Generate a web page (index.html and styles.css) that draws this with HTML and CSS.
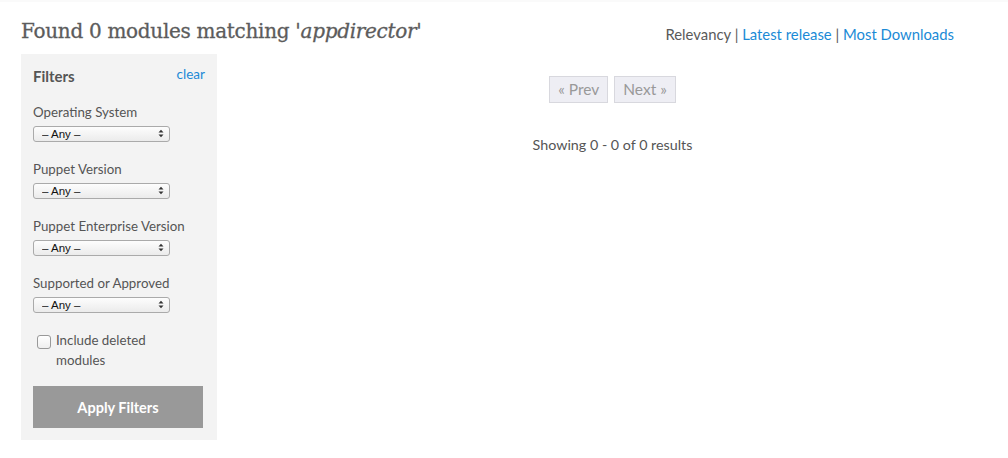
FILE: index.html
```html
<!DOCTYPE html>
<html>
<head>
<meta charset="utf-8">
<link rel="stylesheet" href="styles.css">
</head>
<body>
<div class="page">
  <div class="topline"></div>
  <div class="head">
    <h1 class="title">Found 0 modules matching '<em>appdirector</em>'</h1>
    <div class="sort">Relevancy <span class="sep">|</span> <a href="#">Latest release</a> <span class="sep">|</span> <a href="#">Most Downloads</a></div>
  </div>
  <div class="body">
    <aside class="filters">
      <div class="filters-head">
        <span class="filters-title">Filters</span>
        <a href="#" class="clear">clear</a>
      </div>
      <div class="field">
        <div class="label">Operating System</div>
        <div class="select-wrap">
          <select class="select"><option>– Any –</option></select>
          <svg class="arrows" width="6" height="9" viewBox="0 0 6 9"><path d="M0.5 3.5 L3 0.8 L5.5 3.5 Z M0.5 5.5 L3 8.2 L5.5 5.5 Z" fill="#333"/></svg>
        </div>
      </div>
      <div class="field">
        <div class="label">Puppet Version</div>
        <div class="select-wrap">
          <select class="select"><option>– Any –</option></select>
          <svg class="arrows" width="6" height="9" viewBox="0 0 6 9"><path d="M0.5 3.5 L3 0.8 L5.5 3.5 Z M0.5 5.5 L3 8.2 L5.5 5.5 Z" fill="#333"/></svg>
        </div>
      </div>
      <div class="field">
        <div class="label">Puppet Enterprise Version</div>
        <div class="select-wrap">
          <select class="select"><option>– Any –</option></select>
          <svg class="arrows" width="6" height="9" viewBox="0 0 6 9"><path d="M0.5 3.5 L3 0.8 L5.5 3.5 Z M0.5 5.5 L3 8.2 L5.5 5.5 Z" fill="#333"/></svg>
        </div>
      </div>
      <div class="field">
        <div class="label">Supported or Approved</div>
        <div class="select-wrap">
          <select class="select"><option>– Any –</option></select>
          <svg class="arrows" width="6" height="9" viewBox="0 0 6 9"><path d="M0.5 3.5 L3 0.8 L5.5 3.5 Z M0.5 5.5 L3 8.2 L5.5 5.5 Z" fill="#333"/></svg>
        </div>
      </div>
      <label class="check">
        <input type="checkbox" class="checkbox">
        <span class="check-text">Include deleted modules</span>
      </label>
      <button class="apply">Apply Filters</button>
    </aside>
    <main class="results">
      <div class="pager">
        <span class="pbtn">« Prev</span>
        <span class="pbtn">Next »</span>
      </div>
      <p class="showing">Showing 0 - 0 of 0 results</p>
    </main>
  </div>
</div>
</body>
</html>
```

FILE: styles.css
```css
* { box-sizing: border-box; }
html, body { margin: 0; padding: 0; background: #fff; }
body {
  font-family: "Lato", "Noto Sans", sans-serif;
  font-size: 14px;
  color: #555;
}
.page { width: 1008px; }
.topline { height: 2px; background: #fafafa; }
.head {
  display: flex;
  justify-content: space-between;
  align-items: flex-end;
  padding: 0 54px 0 21px;
  height: 52px;
}
.title {
  margin: 0 0 11px 0;
  font-family: "DejaVu Serif", serif;
  font-weight: normal;
  font-size: 20px;
  color: #5c5c5c;
  letter-spacing: -0.3px;
  -webkit-text-stroke: 0.3px #5c5c5c;
}
.title em { font-style: italic; }
.sort {
  font-size: 14.85px;
  color: #5a5a5a;
  margin-bottom: 11px;
}
.sort a { color: #1b8ad6; text-decoration: none; }
.sep { color: #5a5a5a; }
.body {
  display: flex;
  padding: 0 0 0 21px;
}
.filters {
  width: 196px;
  background: #f3f3f3;
  padding: 12px;
  display: flex;
  flex-direction: column;
}
.filters-head {
  display: flex;
  justify-content: space-between;
  height: 20px;
  margin-bottom: 16px;
  line-height: 20px;
}
.filters-title { font-weight: bold; color: #555; font-size: 15px; }
.clear { color: #1b8ad6; text-decoration: none; font-size: 13.5px; line-height: 16px; }
.field { margin-bottom: 17px; }
.label { line-height: 20px; height: 20px; margin-bottom: 4px; color: #555; font-size: 13.3px; }
.select-wrap { position: relative; width: 137px; height: 16px; }
.select {
  -webkit-appearance: none;
  appearance: none;
  width: 137px;
  height: 16px;
  border: 1px solid #aaa;
  border-radius: 3px;
  background: linear-gradient(#fdfdfd, #ebebeb);
  font-family: "Liberation Sans", sans-serif;
  font-size: 11.5px;
  color: #111;
  padding: 0 0 0 8px;
  line-height: 14px;
  margin: 0;
  display: block;
}
.arrows { position: absolute; right: 6px; top: 3px; }
.check {
  display: flex;
  align-items: flex-start;
  margin: 1px 0 16px 4px;
}
.checkbox {
  -webkit-appearance: none;
  appearance: none;
  width: 14px;
  height: 14px;
  border: 1px solid #999;
  border-radius: 3px;
  background: linear-gradient(#fff, #efefef);
  margin: 4px 5px 0 0;
  flex: none;
}
.check-text { width: 110px; line-height: 19.5px; color: #555; font-size: 13.3px; }
.apply {
  width: 170px;
  height: 42px;
  background: #999;
  border: none;
  color: #fff;
  font-family: "Lato", sans-serif;
  font-weight: bold;
  font-size: 14.5px;
  margin: 0;
  padding: 0;
}
.results {
  flex: 1;
  display: flex;
  flex-direction: column;
  align-items: center;
  padding-top: 22px;
}
.pager { display: flex; gap: 6px; }
.pbtn {
  display: inline-block;
  border: 1px solid #d8d8de;
  background: #eeeef4;
  color: #999;
  font-size: 15.5px;
  height: 27px;
  line-height: 25px;
  padding: 0 8px;
}
.showing { margin: 33px 0 0 0; color: #555; font-size: 14.3px; }
```
